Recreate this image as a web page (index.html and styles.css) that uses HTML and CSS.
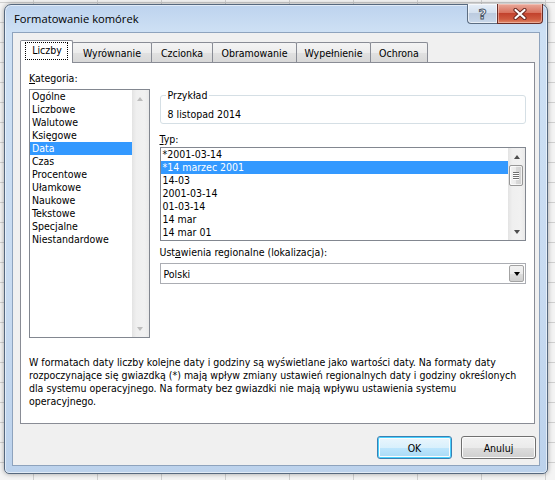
FILE: index.html
```html
<!DOCTYPE html>
<html lang="pl">
<head>
<meta charset="utf-8">
<title>Formatowanie komórek</title>
<link rel="stylesheet" href="styles.css">
</head>
<body>
<div class="window">
  <div class="titlebar">
    <span class="title">Formatowanie komórek</span>
    <div class="caption-buttons">
      <span class="cbtn help">?</span>
      <span class="cbtn close">
        <svg width="14" height="12" viewBox="0 0 14 12">
          <path d="M2.5 2 L11.5 10 M11.5 2 L2.5 10" stroke="#6b2a22" stroke-width="4.2" stroke-linecap="round"/>
          <path d="M2.5 2 L11.5 10 M11.5 2 L2.5 10" stroke="#ffffff" stroke-width="2.2" stroke-linecap="round"/>
        </svg>
      </span>
    </div>
  </div>
  <div class="client">
    <div class="tabs">
      <div class="tab active t1"><span class="focus">Liczby</span></div>
      <div class="tab t2">Wyrównanie</div>
      <div class="tab t3">Czcionka</div>
      <div class="tab t4">Obramowanie</div>
      <div class="tab t5">Wypełnienie</div>
      <div class="tab t6">Ochrona</div>
    </div>
    <div class="panel">
      <div class="columns">
        <div class="left">
          <div class="label"><u>K</u>ategoria:</div>
          <div class="listbox cat">
            <ul class="items">
              <li>Ogólne</li>
              <li>Liczbowe</li>
              <li>Walutowe</li>
              <li>Księgowe</li>
              <li class="sel">Data</li>
              <li>Czas</li>
              <li>Procentowe</li>
              <li>Ułamkowe</li>
              <li>Naukowe</li>
              <li>Tekstowe</li>
              <li>Specjalne</li>
              <li>Niestandardowe</li>
            </ul>
            <div class="vscroll disabled">
              <span class="arrow up"></span>
              <span class="track"></span>
              <span class="arrow down"></span>
            </div>
          </div>
        </div>
        <div class="right">
          <fieldset class="group">
            <legend>Przykład</legend>
            <div class="sample">8 listopad 2014</div>
          </fieldset>
          <div class="label typ-label"><u>T</u>yp:</div>
          <div class="listbox typ">
            <ul class="items">
              <li>*2001-03-14</li>
              <li class="sel">*14 marzec 2001</li>
              <li>14-03</li>
              <li>2001-03-14</li>
              <li>01-03-14</li>
              <li>14 mar</li>
              <li>14 mar 01</li>
            </ul>
            <div class="vscroll">
              <span class="arrow up"></span>
              <span class="thumb"><i></i><i></i><i></i><i></i></span>
              <span class="track"></span>
              <span class="arrow down"></span>
            </div>
          </div>
          <div class="label loc-label">Ust<u>a</u>wienia regionalne (lokalizacja):</div>
          <div class="combo">
            <span class="combo-text">Polski</span>
            <span class="drop"></span>
          </div>
        </div>
      </div>
      <p class="desc">W formatach daty liczby kolejne daty i godziny są wyświetlane jako wartości daty. Na formaty daty<br>rozpoczynające się gwiazdką (*) mają wpływ zmiany ustawień regionalnych daty i godziny określonych<br>dla systemu operacyjnego. Na formaty bez gwiazdki nie mają wpływu ustawienia systemu<br>operacyjnego.</p>
    </div>
    <div class="buttons">
      <button class="btn default">OK</button>
      <button class="btn">Anuluj</button>
    </div>
  </div>
</div>
</body>
</html>
```
FILE: styles.css
```css
* { box-sizing: border-box; }
html, body { margin: 0; padding: 0; }
body {
  width: 555px;
  height: 480px;
  overflow: hidden;
  background-color: #f4f4f4;
  background-image:
    linear-gradient(to right, #d0d0d0 1px, transparent 1px),
    linear-gradient(to bottom, #d0d0d0 1px, transparent 1px);
  background-size: 64px 20px;
  background-position: 33px 0, 0 2px;
  font-family: "DejaVu Sans Condensed", "Liberation Sans", sans-serif;
  font-size: 10.5px;
  color: #000;
}

.window {
  margin: 4px 0 0 4px;
  width: 544px;
  height: 470px;
  border: 1px solid #56687e;
  border-radius: 7px 7px 5px 5px;
  background: linear-gradient(to bottom, #bdd3ee 0, #cde0f4 26px, #c8dbf1 60%, #bcd2ec 100%);
  box-shadow: inset 0 0 0 1px rgba(255,255,255,0.55), 0 0 5px rgba(0,0,0,0.35);
  padding: 0 7px 7px 7px;
  display: flex;
  flex-direction: column;
}

.titlebar {
  height: 27px;
  display: flex;
  justify-content: space-between;
  align-items: flex-start;
}
.title {
  font-family: "Open Sans", "Noto Sans", sans-serif;
  font-size: 11.2px;
  line-height: 16px;
  padding: 6px 0 0 2px;
  color: #000;
}
.caption-buttons {
  display: flex;
  margin-right: -3px;
  margin-top: -1px;
}
.cbtn {
  height: 20px;
  display: flex;
  align-items: center;
  justify-content: center;
  border: 1px solid #5c6d82;
  border-top: none;
}
.help {
  width: 30px;
  border-right: none;
  border-radius: 0 0 0 4px;
  background: linear-gradient(to bottom, #e6eef8 0, #d5e1ef 45%, #bccbdf 50%, #c9d8ea 100%);
  box-shadow: inset 0 0 0 1px rgba(255,255,255,0.6);
  font-family: "DejaVu Sans", sans-serif;
  font-weight: bold;
  font-size: 14px;
  color: #f4f6f9;
  -webkit-text-stroke: 1px #4c5868;
  padding-top: 1px;
}
.close {
  width: 46px;
  border-color: #6a2d27;
  border-radius: 0 0 4px 0;
  background: linear-gradient(to bottom, #e9a99b 0, #d9735f 45%, #c2422d 50%, #cf5a3f 80%, #e08a6a 100%);
  box-shadow: inset 0 0 0 1px rgba(255,220,210,0.45);
}

.client {
  flex: 1;
  background: #f0f0f0;
  border: 1px solid #8ea3bd;
  padding: 7px 3px 0 7px;
  display: flex;
  flex-direction: column;
}

.tabs {
  display: flex;
  align-items: flex-end;
  height: 22px;
  position: relative;
  z-index: 1;
}
.tab {
  height: 20px;
  border: 1px solid #898c95;
  border-bottom: none;
  border-radius: 2px 2px 0 0;
  background: linear-gradient(to bottom, #f4f4f4 0, #ececec 50%, #e1e1e1 51%, #d8d8d8 100%);
  display: flex;
  align-items: center;
  justify-content: center;
  margin-left: -1px;
  padding-top: 1px;
}
.tab.active {
  height: 23px;
  margin-left: 0;
  margin-bottom: -1px;
  background: #fff;
  position: relative;
  z-index: 2;
  padding-top: 0;
  padding-bottom: 2px;
}
.t1 { width: 53px; }
.t2 { width: 80px; }
.t3 { width: 62px; }
.t4 { width: 85px; }
.t5 { width: 75px; }
.t6 { width: 58px; }
.focus {
  border: 1px dotted #000;
  padding: 1px 5px 2px 6px;
  line-height: 13px;
}

.panel {
  height: 362px;
  margin-right: 1px;
  border: 1px solid #898c95;
  background: #fff;
  padding: 9px 8px 0 8px;
}

.columns {
  display: flex;
  gap: 10px;
}
.left { width: 121px; }
.right { width: 368px; padding-top: 17px; }

.label {
  line-height: 13px;
  height: 13px;
}
.left .label { margin-bottom: 4px; }

.listbox {
  display: flex;
  border: 1px solid #828790;
  background: #fff;
}
.listbox.cat { height: 249px; }
.listbox.typ { height: 94px; margin-top: 1px; }

.items {
  list-style: none;
  margin: 0;
  padding: 0;
  flex: 1;
}
.items li {
  height: 13px;
  line-height: 13px;
  padding-left: 2px;
  white-space: nowrap;
}
.items li.sel {
  background: #3399ff;
  color: #fff;
}

.vscroll {
  width: 17px;
  display: flex;
  flex-direction: column;
  background: linear-gradient(to right, #e3e3e3 0, #efefef 25%, #f1f1f1 75%, #e9e9e9 100%);
}
.vscroll .track { flex: 1; }
.arrow {
  height: 17px;
  display: flex;
  align-items: center;
  justify-content: center;
}
.arrow::before {
  content: "";
  width: 0;
  height: 0;
  border-left: 3.5px solid transparent;
  border-right: 3.5px solid transparent;
}
.arrow.up::before { border-bottom: 4px solid #4d4d4d; }
.arrow.down::before { border-top: 4px solid #4d4d4d; }
.disabled .arrow.up::before { border-bottom-color: #bcbcbc; }
.disabled .arrow.down::before { border-top-color: #bcbcbc; }

.thumb {
  height: 21px;
  margin: 0 2px 0 1px;
  border: 1px solid #979797;
  border-radius: 2px;
  background: linear-gradient(to right, #f3f3f3 0, #e9e9e9 50%, #d9d9d9 51%, #d0d0d0 100%);
  box-shadow: inset 0 0 0 1px rgba(255,255,255,0.7);
  display: flex;
  flex-direction: column;
  align-items: center;
  justify-content: center;
  gap: 1px;
}
.thumb i {
  display: block;
  width: 6px;
  height: 1px;
  background: #6f6f6f;
  box-shadow: 0 1px 0 #ffffff;
}

.group {
  margin: 0;
  width: 366px;
  padding: 0 6px 2px 5px;
  border: 1px solid #d5dfe5;
  border-radius: 3px;
}
.group legend {
  padding: 0 2px;
  line-height: 13px;
}
.sample {
  margin-top: 6px;
  padding-left: 2px;
  line-height: 13px;
}

.typ-label { margin-top: 9px; }
.loc-label { margin-top: 5px; }

.combo {
  margin-top: 4px;
  height: 21px;
  border: 1px solid #abadb3;
  display: flex;
  align-items: center;
  background: #fff;
  padding: 0 1px 0 2px;
}
.combo-text { flex: 1; padding-left: 1px; }
.drop {
  width: 15px;
  height: 17px;
  border: 1px solid #a3a3a3;
  border-radius: 2px;
  background: linear-gradient(to bottom, #f2f2f2 0, #ebebeb 50%, #dddddd 51%, #cfcfcf 100%);
  display: flex;
  align-items: center;
  justify-content: center;
}
.drop::before {
  content: "";
  border-left: 3.5px solid transparent;
  border-right: 3.5px solid transparent;
  border-top: 4px solid #000;
}

.desc {
  margin: 18px 0 0 0;
  line-height: 13px;
  white-space: nowrap;
}

.buttons {
  display: flex;
  justify-content: flex-end;
  gap: 9px;
  margin-top: 12px;
  padding-right: 0;
}
.btn {
  width: 75px;
  height: 23px;
  font-family: inherit;
  font-size: 10.5px;
  color: #000;
  border: 1px solid #707070;
  border-radius: 3px;
  background: linear-gradient(to bottom, #f2f2f2 0, #ebebeb 50%, #dddddd 51%, #cfcfcf 100%);
  box-shadow: inset 0 0 0 1px #fcfcfc;
  padding: 0;
}
.btn.default {
  border-color: #3c7fb1;
  box-shadow: inset 0 0 0 1px #48d1ff, inset 0 0 0 2px #fcfcfc;
  background: linear-gradient(to bottom, #eaf6fd 0, #d9f0fc 50%, #bee6fd 51%, #a7d9f5 100%);
}
```
